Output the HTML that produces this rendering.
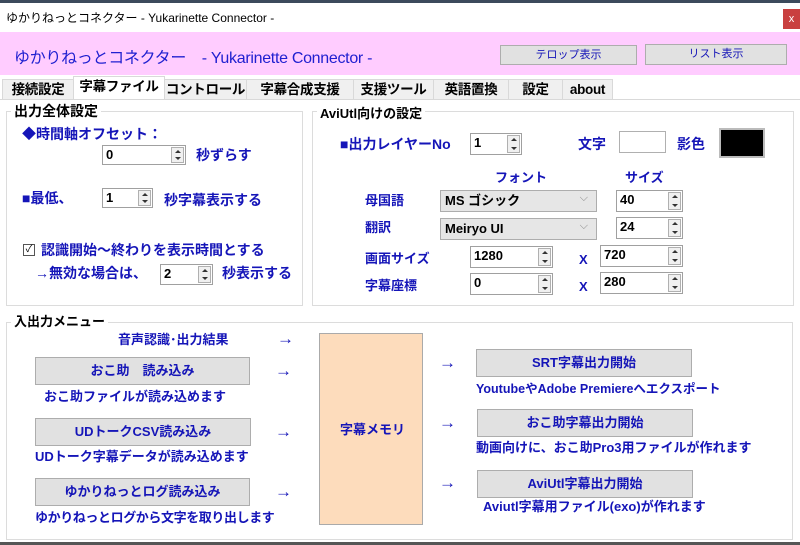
<!DOCTYPE html>
<html><head><meta charset="utf-8"><style>
*{margin:0;padding:0;box-sizing:border-box}
body{width:800px;height:545px;overflow:hidden;background:#fff;font-family:"Liberation Sans","Noto Sans CJK JP",sans-serif;position:relative}
.a{position:absolute;white-space:nowrap}
.b{color:#1515b8;font-weight:bold;font-size:13px;line-height:16px}
.ar{font-size:17px;line-height:16px}
.grp{position:absolute;border:1px solid #dcdcdc}
.gl{position:absolute;background:#fff;font-size:14px;line-height:16px;padding:0 3px;color:#000;font-weight:bold}
.btn{position:absolute;background:#e1e1e1;border:1px solid #adadad;color:#1515b8;font-size:13px;font-weight:bold;text-align:center}
.in{position:absolute;background:#fff;border:1px solid #a0a0a0;font-size:13px;font-weight:bold;padding-left:3px;line-height:18px}
.sp{position:absolute;right:1px;top:1px;bottom:1px;width:13px;border:1px solid #b0b0b0;background:#f0f0f0}
.sp:before{content:"";position:absolute;left:3px;top:2px;border:3px solid transparent;border-bottom:3px solid #333;border-top:0}
.sp:after{content:"";position:absolute;left:3px;bottom:2px;border:3px solid transparent;border-top:3px solid #333;border-bottom:0}
.tab{position:absolute;top:79px;height:21px;background:#f0f0f0;border:1px solid #d9d9d9;font-size:13.5px;font-weight:bold;text-align:center;line-height:19px;white-space:nowrap;letter-spacing:-0.3px}
.sel{position:absolute;background:#e6e6e6;border:1px solid #adadad;font-size:13px;font-weight:bold;padding-left:4px;line-height:19px}
.sel:after{content:"⌵";position:absolute;right:8px;top:-2px;color:#888;font-weight:normal;font-size:11px}
</style></head><body>
<div class="a" style="left:0;top:0;width:800px;height:3px;background:#3c4a5c"></div>
<div class="a" style="left:6px;top:9px;font-size:12px;color:#000">ゆかりねっとコネクター - Yukarinette Connector -</div>
<div class="a" style="left:783px;top:9px;width:17px;height:20px;background:#c94040;color:#fff;font-size:11px;text-align:center;line-height:20px">x</div>
<div class="a" style="left:0;top:32px;width:800px;height:43px;background:#ffccff"></div>
<div class="a" style="left:14px;top:44px;font-size:16px;color:#2020d0;letter-spacing:-0.3px">ゆかりねっとコネクター　- Yukarinette Connector -</div>
<div class="btn" style="left:500px;top:45px;width:137px;height:20px;font-weight:normal;font-size:11px;line-height:18px">テロップ表示</div>
<div class="btn" style="left:645px;top:44px;width:142px;height:21px;font-weight:normal;font-size:11px;line-height:19px">リスト表示</div>

<div class="tab" style="left:2px;width:72px">接続設定</div>
<div class="tab" style="left:73px;width:92px;top:76px;height:24px;background:#fff;border-bottom:none">字幕ファイル</div>
<div class="tab" style="left:164px;width:83px">コントロール</div>
<div class="tab" style="left:246px;width:108px">字幕合成支援</div>
<div class="tab" style="left:353px;width:81px">支援ツール</div>
<div class="tab" style="left:433px;width:76px">英語置換</div>
<div class="tab" style="left:508px;width:55px">設定</div>
<div class="tab" style="left:562px;width:51px">about</div>
<div class="a" style="left:0;top:99px;width:800px;height:1px;background:#d9d9d9"></div>

<div class="grp" style="left:6px;top:111px;width:297px;height:195px"></div>
<div class="gl" style="left:11px;top:103px">出力全体設定</div>
<div class="a b" style="left:22px;top:126px;font-size:14px">◆時間軸オフセット：</div>
<div class="in" style="left:102px;top:145px;width:84px;height:20px">0<div class="sp"></div></div>
<div class="a b" style="left:196px;top:147px;font-size:14px">秒ずらす</div>
<div class="a b" style="left:22px;top:190px;font-size:14px">■最低、</div>
<div class="in" style="left:102px;top:188px;width:51px;height:20px">1<div class="sp"></div></div>
<div class="a b" style="left:164px;top:192px;font-size:14px">秒字幕表示する</div>
<div class="a" style="left:23px;top:244px;width:12px;height:12px;border:1px solid #555;font-size:10px;line-height:10px;text-align:center">✓</div>
<div class="a b" style="left:41px;top:242px;font-size:14px">認識開始～終わりを表示時間とする</div>
<div class="a b" style="left:35px;top:265px;font-size:14px">→無効な場合は、</div>
<div class="in" style="left:160px;top:264px;width:53px;height:21px">2<div class="sp"></div></div>
<div class="a b" style="left:222px;top:265px;font-size:14px">秒表示する</div>

<div class="grp" style="left:312px;top:111px;width:482px;height:195px"></div>
<div class="gl" style="left:317px;top:106px;font-size:13px">AviUtl向けの設定</div>
<div class="a b" style="left:340px;top:136px;font-size:14px">■出力レイヤーNo</div>
<div class="in" style="left:470px;top:133px;width:52px;height:22px">1<div class="sp"></div></div>
<div class="a b" style="left:578px;top:136px;font-size:14px">文字</div>
<div class="a" style="left:619px;top:131px;width:47px;height:22px;border:1px solid #b0b0b0;background:#fff"></div>
<div class="a b" style="left:677px;top:136px;font-size:14px">影色</div>
<div class="a" style="left:719px;top:128px;width:46px;height:30px;border:2px solid #bbb;background:#000"></div>
<div class="a b" style="left:495px;top:170px">フォント</div>
<div class="a b" style="left:625px;top:170px">サイズ</div>
<div class="a b" style="left:365px;top:193px">母国語</div>
<div class="sel" style="left:440px;top:190px;width:157px;height:22px">MS ゴシック</div>
<div class="in" style="left:616px;top:190px;width:67px;height:22px">40<div class="sp"></div></div>
<div class="a b" style="left:365px;top:220px">翻訳</div>
<div class="sel" style="left:440px;top:218px;width:157px;height:22px">Meiryo UI</div>
<div class="in" style="left:616px;top:217px;width:67px;height:22px">24<div class="sp"></div></div>
<div class="a b" style="left:365px;top:251px">画面サイズ</div>
<div class="in" style="left:470px;top:246px;width:83px;height:22px">1280<div class="sp"></div></div>
<div class="a b" style="left:579px;top:252px">X</div>
<div class="in" style="left:600px;top:245px;width:83px;height:22px">720<div class="sp"></div></div>
<div class="a b" style="left:365px;top:278px">字幕座標</div>
<div class="in" style="left:470px;top:273px;width:83px;height:22px">0<div class="sp"></div></div>
<div class="a b" style="left:579px;top:279px">X</div>
<div class="in" style="left:600px;top:272px;width:83px;height:22px">280<div class="sp"></div></div>

<div class="grp" style="left:6px;top:322px;width:787px;height:218px"></div>
<div class="gl" style="left:11px;top:314px;font-size:13px">入出力メニュー</div>
<div class="a b" style="left:118px;top:332px">音声認識･出力結果</div>
<div class="a b ar" style="left:277px;top:331px">→</div>
<div class="btn" style="left:35px;top:357px;width:215px;height:28px;line-height:26px">おこ助　読み込み</div>
<div class="a b ar" style="left:275px;top:363px">→</div>
<div class="a b" style="left:44px;top:389px">おこ助ファイルが読み込めます</div>
<div class="btn" style="left:35px;top:418px;width:216px;height:28px;line-height:26px">UDトークCSV読み込み</div>
<div class="a b ar" style="left:275px;top:424px">→</div>
<div class="a b" style="left:35px;top:449px">UDトーク字幕データが読み込めます</div>
<div class="btn" style="left:35px;top:478px;width:215px;height:28px;line-height:26px">ゆかりねっとログ読み込み</div>
<div class="a b ar" style="left:275px;top:484px">→</div>
<div class="a b" style="left:35px;top:510px;letter-spacing:-0.4px">ゆかりねっとログから文字を取り出します</div>
<div class="a" style="left:319px;top:333px;width:104px;height:192px;background:#fddcbc;border:1px solid #aaa"></div>
<div class="a b" style="left:340px;top:422px">字幕メモリ</div>
<div class="a b ar" style="left:439px;top:355px">→</div>
<div class="btn" style="left:476px;top:349px;width:216px;height:28px;line-height:26px">SRT字幕出力開始</div>
<div class="a b" style="left:476px;top:381px;font-size:12.5px">YoutubeやAdobe Premiereへエクスポート</div>
<div class="a b ar" style="left:439px;top:415px">→</div>
<div class="btn" style="left:477px;top:409px;width:216px;height:28px;line-height:26px">おこ助字幕出力開始</div>
<div class="a b" style="left:476px;top:440px">動画向けに、おこ助Pro3用ファイルが作れます</div>
<div class="a b ar" style="left:439px;top:475px">→</div>
<div class="btn" style="left:477px;top:470px;width:216px;height:28px;line-height:26px">AviUtl字幕出力開始</div>
<div class="a b" style="left:483px;top:499px">Aviutl字幕用ファイル(exo)が作れます</div>
<div class="a" style="left:0;top:542px;width:800px;height:3px;background:#555"></div>
</body></html>
